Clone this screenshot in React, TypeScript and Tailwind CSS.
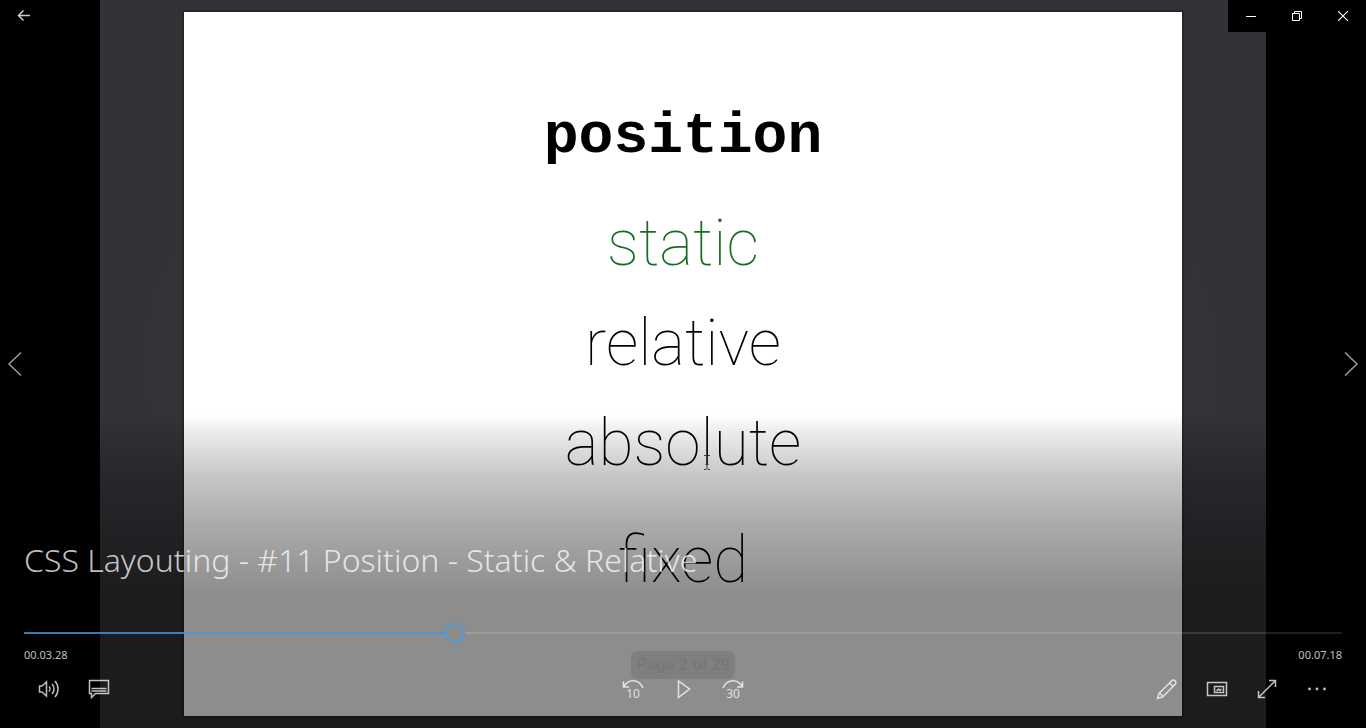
import React, { useState } from "react";
import type { CSSProperties, ReactNode } from "react";

function Icon({ size = 24, children }: { size?: number; children: ReactNode }) {
  return (
    <svg width={size} height={size} viewBox={`0 0 ${size} ${size}`} fill="none" stroke="currentColor" strokeWidth="1.5" aria-hidden="true">
      {children}
    </svg>
  );
}

function ControlButton({ label, children }: { label: string; children: ReactNode }) {
  return (
    <button type="button" aria-label={label} className="flex h-[46px] w-[50px] items-center justify-center text-white/75">
      {children}
    </button>
  );
}

function WindowButton({ label, children }: { label: string; children: ReactNode }) {
  return (
    <button type="button" aria-label={label} className="flex h-8 w-[46px] items-center justify-center text-white">
      {children}
    </button>
  );
}

function TextCursor() {
  return (
    <svg width="8" height="15" viewBox="0 0 8 15" fill="none" stroke="#3a3a3a" strokeWidth="1" className="absolute right-[90px] bottom-6" aria-hidden="true">
      <path d="M1 .5h2l1 1 1-1h2M4 1.500v12M1 14.500h2l1-1 1 1h2M2.500 9.500h3" />
    </svg>
  );
}

function Slide() {
  return (
    <div className="flex h-full justify-center bg-black px-[100px]">
      <div className="flex w-full flex-col bg-[radial-gradient(ellipse_at_center,#36383c_0%,#36383c_45%,#333237_65%)] px-[84px] py-3">
        <div className="flex flex-1 flex-col items-center bg-white text-[64px] leading-[100px] font-thin text-black shadow-[0_0_2px_1px_#1c1c1c] font-['Roboto',sans-serif]">
          <h1 className="mt-[75px] mb-[7px] text-[58px] font-bold font-['Liberation_Mono',monospace]">position</h1>
          <p className="text-[#1a6b22]">static</p>
          <p>relative</p>
          <p className="relative">
            absolute
            <TextCursor />
          </p>
          <p className="mt-[17px]">fixed</p>
          <p className="mt-auto mb-[37px] h-7 rounded-md bg-[#e6e6e6] px-[5px] text-[16px] leading-7 font-bold text-[#d8d8d8] font-['Liberation_Sans',sans-serif]">
            Page 2 of 29
          </p>
        </div>
      </div>
    </div>
  );
}

function SeekBar() {
  const [value, setValue] = useState(32.4);
  const start = `calc((100% - 20px) * ${value / 100})`;
  const end = `calc((100% - 20px) * ${value / 100} + 20px)`;
  const track: CSSProperties = {
    backgroundImage: `linear-gradient(to right, #3f97e0d0 ${start}, transparent ${start}, transparent ${end}, #ffffff20 ${end})`,
  };
  return (
    <input
      type="range"
      aria-label="Seek"
      min={0}
      max={100}
      step={0.1}
      value={value}
      onChange={(e) => setValue(Number(e.target.value))}
      style={track}
      className="block h-[22px] w-full appearance-none bg-transparent bg-[length:100%_2px] bg-center bg-no-repeat outline-none [&::-webkit-slider-thumb]:size-5 [&::-webkit-slider-thumb]:appearance-none [&::-webkit-slider-thumb]:rounded-full [&::-webkit-slider-thumb]:border-2 [&::-webkit-slider-thumb]:border-solid [&::-webkit-slider-thumb]:border-[#4f9ada] [&::-webkit-slider-thumb]:bg-transparent"
    />
  );
}

function TopBar() {
  return (
    <header className="flex items-start justify-between">
      <button type="button" aria-label="Back" className="flex h-8 w-12 items-center justify-center text-white/80">
        <Icon>
          <path d="M18 11.5H6.5M11.5 6.5l-5 5 5 5" />
        </Icon>
      </button>
      <div className="flex bg-black">
        <WindowButton label="Minimize">
          <Icon size={10}>
            <path d="M0 5.5h10" strokeWidth="1" />
          </Icon>
        </WindowButton>
        <WindowButton label="Restore">
          <Icon size={10}>
            <path d="M.5 2.5h7v7h-7zM2.5 2.5v-2h7v7h-2" strokeWidth="1" />
          </Icon>
        </WindowButton>
        <WindowButton label="Close">
          <Icon size={10}>
            <path d="M0 0l10 10M10 0L0 10" strokeWidth="1.1" />
          </Icon>
        </WindowButton>
      </div>
    </header>
  );
}

function SideArrows() {
  return (
    <nav aria-label="Playlist" className="pointer-events-none col-start-1 row-start-1 flex items-center justify-between text-white/60">
      <button type="button" aria-label="Previous" className="pointer-events-auto flex h-14 w-7 items-center justify-center">
        <Icon>
          <path d="M19 .5L7 12l12 11.500" />
        </Icon>
      </button>
      <button type="button" aria-label="Next" className="pointer-events-auto flex h-14 w-7 items-center justify-center">
        <Icon>
          <path d="M5 .5L17 12 5 23.500" />
        </Icon>
      </button>
    </nav>
  );
}

function Skip({ seconds, forward }: { seconds: number; forward?: boolean }) {
  return (
    <svg width="24" height="24" viewBox="0 0 24 24" fill="none" stroke="currentColor" strokeWidth="1.6" aria-hidden="true">
      <path
        d={
          forward
            ? "M2 11C4 6 7.500 3.700 12 3.700S19 5.500 21.300 10M21.500 4.500v5.500H16"
            : "M22 11C20 6 16.500 3.700 12 3.700S5 5.500 2.700 10M2.500 4.500v5.500H8"
        }
      />
      <text x="12" y="21" textAnchor="middle" fontSize="12" fill="currentColor" stroke="none" className="font-['Noto_Sans',sans-serif]">
        {seconds}
      </text>
    </svg>
  );
}

function Controls() {
  return (
    <footer className="bg-[linear-gradient(to_bottom,#00000000_0px,#00000014_18px,#00000038_60px,#00000056_112px,#00000072_180px)] px-6 pt-[123px] pb-4 text-white/75 font-['Noto_Sans',sans-serif]">
      <h2 className="mb-10 text-[32px] leading-[44px] font-light">CSS Layouting - #11 Position - Static &amp; Relative</h2>
      <SeekBar />
      <div className="flex justify-between text-[11px] leading-[22px]">
        <span>00.03.28</span>
        <span>00.07.18</span>
      </div>
      <div className="grid grid-cols-3">
        <div className="flex">
          <ControlButton label="Volume">
            <Icon>
              <path d="M2.500 9H5l4.500-4v14L5 15H2.500z" />
              <path d="M12 9.500c1.300 1.300 1.300 3.700 0 5M15 7c2.700 2.700 2.700 7.300 0 10M18 4c4 4.500 4 11.500 0 16" />
            </Icon>
          </ControlButton>
          <ControlButton label="Subtitles">
            <Icon>
              <path d="M2.500 3.500h19v13H8.500l-4 4v-4h-2z" />
              <path d="M4.500 11.500h15M4.500 14h15" />
            </Icon>
          </ControlButton>
        </div>
        <div className="flex justify-center">
          <ControlButton label="Skip back 10 seconds">
            <Skip seconds={10} />
          </ControlButton>
          <ControlButton label="Play">
            <Icon>
              <path d="M7.500 4v16.500L18.500 12z" />
            </Icon>
          </ControlButton>
          <ControlButton label="Skip forward 30 seconds">
            <Skip seconds={30} forward />
          </ControlButton>
        </div>
        <div className="flex justify-end">
          <ControlButton label="Edit">
            <Icon>
              <path d="M2.500 21.500L4 16.500 16.500 4c2.500-2.500 6 1 3.500 3.500L7.500 20zM14.500 6l3.500 3.500M4 16.500c1.500 0 3.500 2 3.500 3.500" />
            </Icon>
          </ControlButton>
          <ControlButton label="Mini view">
            <Icon>
              <path d="M2.500 5.500h19v13h-19z" />
              <path d="M9.500 9.500h9v6h-9zM11.500 14l2-2 1.500 1.500 1.500-1.500" />
            </Icon>
          </ControlButton>
          <ControlButton label="Full screen">
            <Icon>
              <path d="M3.500 20.500l17-17M14 3.500h6.500V10M3.500 14v6.500H10" />
            </Icon>
          </ControlButton>
          <ControlButton label="More">
            <Icon>
              <g fill="currentColor" stroke="none">
                <circle cx="4.500" cy="12" r="1.400" />
                <circle cx="12" cy="12" r="1.400" />
                <circle cx="19.500" cy="12" r="1.400" />
              </g>
            </Icon>
          </ControlButton>
        </div>
      </div>
    </footer>
  );
}

export default function App() {
  return (
    <main className="grid h-screen overflow-hidden bg-black">
      <div className="col-start-1 row-start-1 min-h-0">
        <Slide />
      </div>
      <div className="col-start-1 row-start-1 flex min-h-0 flex-col justify-between">
        <TopBar />
        <Controls />
      </div>
      <SideArrows />
    </main>
  );
}
